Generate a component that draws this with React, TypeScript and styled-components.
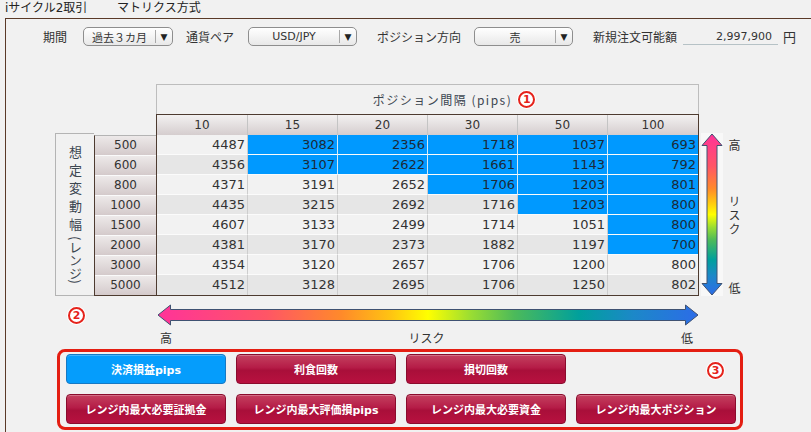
import styled, { createGlobalStyle } from 'styled-components';

const GlobalStyle = createGlobalStyle`
  html, body {
    margin: 0;
    padding: 0;
    background: #f1f1f1;
  }
  body {
    font-family: "DejaVu Sans", "Noto Sans CJK JP", sans-serif;
    color: #333;
  }
`

const COLS = ['10', '15', '20', '30', '50', '100'];

type MatrixRow = {
  range: string,
  values: number[],
  hot: number,
}

// hot = index of the first highlighted column (6 = none)
const ROWS: MatrixRow[] = [
  { range: '500', values: [4487, 3082, 2356, 1718, 1037, 693], hot: 1 },
  { range: '600', values: [4356, 3107, 2622, 1661, 1143, 792], hot: 1 },
  { range: '800', values: [4371, 3191, 2652, 1706, 1203, 801], hot: 3 },
  { range: '1000', values: [4435, 3215, 2692, 1716, 1203, 800], hot: 4 },
  { range: '1500', values: [4607, 3133, 2499, 1714, 1051, 800], hot: 5 },
  { range: '2000', values: [4381, 3170, 2373, 1882, 1197, 700], hot: 5 },
  { range: '3000', values: [4354, 3120, 2657, 1706, 1200, 800], hot: 6 },
  { range: '5000', values: [4512, 3128, 2695, 1706, 1250, 802], hot: 6 },
];

const BUTTONS_TOP = ['決済損益pips', '利食回数', '損切回数'];
const BUTTONS_BOTTOM = ['レンジ内最大必要証拠金', 'レンジ内最大評価損pips', 'レンジ内最大必要資金', 'レンジ内最大ポジション'];

const Page = styled.div`
  width: 811px;
  height: 432px;
  overflow: hidden;
`

const TitleBar = styled.div`
  display: flex;
  height: 18px;
  padding-left: 5px;
  font-size: 12px;
  line-height: 16px;
  color: #222;
`

const TitleItem = styled.span<{ $w?: number }>`
  width: ${p => p.$w ? `${p.$w}px` : 'auto'};
`

const Panel = styled.section`
  margin-left: 5px;
  height: 414px;
  border-top: 1px solid #5a3a28;
  border-left: 1px solid #5a3a28;
`

const ControlRow = styled.div`
  display: flex;
  align-items: center;
  height: 19px;
  margin-top: 8px;
`

const Label = styled.span<{ $before: number, $after: number }>`
  margin-left: ${p => p.$before}px;
  margin-right: ${p => p.$after}px;
  font-family: "Noto Sans CJK JP", sans-serif;
  font-size: 12px;
  color: #333;
`

const Select = styled.div<{ $w: number }>`
  display: flex;
  align-items: center;
  box-sizing: border-box;
  width: ${p => p.$w}px;
  height: 19px;
  border: 1px solid #8e8e8e;
  border-radius: 5px;
  background: linear-gradient(#ffffff, #e8e8e8);
`

const SelectText = styled.span`
  flex: 1;
  text-align: center;
  font-size: 11px;
  color: #333;
`

const SelectSep = styled.span`
  width: 1px;
  height: 13px;
  background: #a8a8a8;
`

const SelectArrow = styled.span`
  width: 16px;
  text-align: center;
  font-size: 9px;
  color: #222;
`

const Amount = styled.span`
  box-sizing: border-box;
  width: 95px;
  padding-right: 6px;
  border-bottom: 1px solid #b6c2c6;
  text-align: right;
  font-size: 11px;
  line-height: 15px;
`

const Yen = styled.span`
  margin-left: 5px;
  font-family: "Noto Sans CJK JP", sans-serif;
  font-size: 13px;
`

const Matrix = styled.div`
  display: flex;
  align-items: flex-end;
  margin: 38px 0 0 49px;
`

const SideLabel = styled.div`
  display: flex;
  justify-content: center;
  align-items: center;
  box-sizing: border-box;
  width: 39px;
  height: 163px;
  border: 1px solid #b4b4b4;
  border-right: none;
`

const SideText = styled.span`
  writing-mode: vertical-rl;
  font-family: "Noto Sans CJK JP", sans-serif;
  font-size: 13px;
  line-height: 14px;
  color: #3c4650;
`

const SideMain = styled.span`
  letter-spacing: 5px;
`

const SideSub = styled.span`
  letter-spacing: 0px;
`

const RowHeads = styled.div`
  display: flex;
  flex-direction: column;
  width: 61px;
  border-left: 1px solid #4d3b30;
  border-top: 1px solid #b4b4b4;
  border-bottom: 1px solid #4d3b30;
`

const RowHead = styled.div`
  box-sizing: border-box;
  height: 20px;
  line-height: 19px;
  border-bottom: 1px solid #fafafa;
  background: linear-gradient(#ede9e9, #d4cacb);
  text-align: center;
  font-size: 12px;
  color: #333;
  &:last-child {
    border-bottom: none;
    height: 19px;
  }
`

const DataBlock = styled.div`
  display: flex;
  flex-direction: column;
  width: 543px;
`

const TitleBox = styled.div`
  display: flex;
  justify-content: center;
  align-items: center;
  box-sizing: border-box;
  height: 30px;
  padding-left: 53px;
  border: 1px solid #bdbdbd;
  border-bottom: none;
`

const TitleText = styled.span`
  font-family: "Noto Sans CJK JP", sans-serif;
  font-size: 12px;
  letter-spacing: 1.5px;
  color: #3c4650;
  margin-right: 6px;
`

const Table = styled.div`
  border: 1px solid #4d3b30;
`

const Row = styled.div`
  display: grid;
  grid-template-columns: 91px repeat(5, 90px);
`

const HeadCell = styled.div`
  box-sizing: border-box;
  height: 20px;
  line-height: 20px;
  border-right: 1px solid #c4c4c4;
  background: linear-gradient(#f3f1f1, #d5cdce);
  text-align: center;
  font-size: 12px;
  color: #333;
  &:last-child {
    border-right: none;
  }
`

const Cell = styled.div<{ $alt: boolean, $hot: boolean, $last: boolean }>`
  box-sizing: border-box;
  height: 20px;
  line-height: 19px;
  padding-right: 2px;
  border-right: 1px solid ${p => p.$hot ? '#d8e8f4' : '#cdcdcd'};
  border-bottom: ${p => p.$last ? 'none' : '1px solid #fbfbfb'};
  background: ${p => p.$hot ? '#0099ff' : p.$alt ? '#e6e6e6' : '#f2f2f2'};
  text-align: right;
  font-size: 13px;
  color: ${p => p.$hot ? '#1c2a38' : '#333'};
  &:last-child {
    border-right: none;
  }
`

const VArrowBox = styled.div`
  width: 22px;
  height: 163px;
  margin-left: 2px;
  background: #f8f8f8;
  svg {
    display: block;
  }
`

const VLabels = styled.div`
  display: flex;
  flex-direction: column;
  justify-content: space-between;
  align-items: center;
  box-sizing: border-box;
  height: 163px;
  padding: 5px 0 2px;
  margin-left: 5px;
  font-family: "Noto Sans CJK JP", sans-serif;
  font-size: 12px;
  line-height: 13px;
  color: #333;
`

const VerticalText = styled.span`
  writing-mode: vertical-rl;
  letter-spacing: 2px;
`

const ArrowRow = styled.div`
  display: flex;
  align-items: center;
  margin: 8px 0 0 62px;
  svg {
    display: block;
    margin-left: 72px;
  }
`

const Marker = styled.span`
  display: inline-flex;
  justify-content: center;
  align-items: center;
  box-sizing: border-box;
  width: 17px;
  height: 17px;
  border: 2px solid #e5231b;
  border-radius: 50%;
  box-shadow: 0 0 0 1px #fff;
  background: #fff;
  color: #e5231b;
  font-size: 11px;
  font-weight: bold;
  line-height: 1;
`

const RiskLabels = styled.div`
  display: flex;
  justify-content: space-between;
  box-sizing: border-box;
  width: 541px;
  margin: 6px 0 0 150px;
  padding: 0 4px;
  font-family: "Noto Sans CJK JP", sans-serif;
  font-size: 12px;
  line-height: 12px;
  color: #333;
`

const ButtonBox = styled.div`
  display: grid;
  grid-template-columns: repeat(4, 160px);
  gap: 10px;
  box-sizing: border-box;
  width: 686px;
  margin: 5px 0 0 51px;
  padding: 2px 4px 3px 6px;
  border: 3px solid #e41e12;
  border-radius: 8px;
`

const ModeButton = styled.button<{ $active?: boolean }>`
  box-sizing: border-box;
  height: 30px;
  padding: 0;
  border: 1px solid ${p => p.$active ? '#1679c4' : '#8a0c2d'};
  border-radius: 4px;
  background: ${p => p.$active
    ? '#059dfc'
    : 'linear-gradient(#c4415f 0%, #b51c47 45%, #a90f3a 55%, #b8113f 100%)'};
  box-shadow: inset 0 1px 0 rgba(255, 255, 255, 0.25);
  color: #fff;
  font-family: "DejaVu Sans", "Noto Sans CJK JP", sans-serif;
  font-size: 11px;
  font-weight: bold;
`

const MarkerCell = styled.div`
  justify-self: end;
  align-self: center;
  margin-right: 12px;
`

const VerticalArrow = () => (
  <svg width="22" height="163" viewBox="0 0 22 163">
    <defs>
      <linearGradient id="vgrad" x1="0" y1="0" x2="0" y2="1">
        <stop offset="0" stopColor="#ff3399" />
        <stop offset="0.2" stopColor="#ff5566" />
        <stop offset="0.34" stopColor="#ff8a2a" />
        <stop offset="0.42" stopColor="#ffc312" />
        <stop offset="0.5" stopColor="#ffff00" />
        <stop offset="0.58" stopColor="#99dd33" />
        <stop offset="0.66" stopColor="#4cba5a" />
        <stop offset="0.78" stopColor="#00a09c" />
        <stop offset="0.88" stopColor="#1c88c8" />
        <stop offset="1" stopColor="#2c6ce8" />
      </linearGradient>
    </defs>
    <path
      d="M11 1 L21 12.5 L16 12.5 L16 150.5 L21 150.5 L11 162 L1 150.5 L6 150.5 L6 12.5 L1 12.5 Z"
      fill="url(#vgrad)"
      stroke="#3f5272"
      strokeWidth="1"
    />
  </svg>
);

const HorizontalArrow = () => (
  <svg width="542" height="22" viewBox="0 0 542 22">
    <defs>
      <linearGradient id="hgrad" x1="0" y1="0" x2="1" y2="0">
        <stop offset="0" stopColor="#ff3399" />
        <stop offset="0.2" stopColor="#ff5566" />
        <stop offset="0.34" stopColor="#ff8a2a" />
        <stop offset="0.43" stopColor="#ffc312" />
        <stop offset="0.5" stopColor="#ffff00" />
        <stop offset="0.58" stopColor="#99dd33" />
        <stop offset="0.66" stopColor="#4cba5a" />
        <stop offset="0.78" stopColor="#00a09c" />
        <stop offset="0.88" stopColor="#1c88c8" />
        <stop offset="1" stopColor="#2c6ce8" />
      </linearGradient>
    </defs>
    <path
      d="M1 11 L13.5 1 L13.5 5.5 L528.5 5.5 L528.5 1 L541 11 L528.5 21 L528.5 16.5 L13.5 16.5 L13.5 21 Z"
      fill="url(#hgrad)"
      stroke="#3f5272"
      strokeWidth="1"
    />
  </svg>
);

export default function App() {
  return (
    <Page>
      <GlobalStyle />
      <TitleBar>
        <TitleItem $w={112}>iサイクル2取引</TitleItem>
        <TitleItem>マトリクス方式</TitleItem>
      </TitleBar>
      <Panel>
        <ControlRow>
          <Label $before={37} $after={16}>期間</Label>
          <Select $w={90}>
            <SelectText>過去３カ月</SelectText>
            <SelectSep />
            <SelectArrow>▼</SelectArrow>
          </Select>
          <Label $before={13} $after={14}>通貨ペア</Label>
          <Select $w={109}>
            <SelectText>USD/JPY</SelectText>
            <SelectSep />
            <SelectArrow>▼</SelectArrow>
          </Select>
          <Label $before={20} $after={13}>ポジション方向</Label>
          <Select $w={99}>
            <SelectText>売</SelectText>
            <SelectSep />
            <SelectArrow>▼</SelectArrow>
          </Select>
          <Label $before={20} $after={6}>新規注文可能額</Label>
          <Amount>2,997,900</Amount>
          <Yen>円</Yen>
        </ControlRow>

        <Matrix>
          <SideLabel>
            <SideText>
              <SideMain>想定変動幅</SideMain>
              <SideSub>(レンジ)</SideSub>
            </SideText>
          </SideLabel>
          <RowHeads>
            {ROWS.map(r => <RowHead key={r.range}>{r.range}</RowHead>)}
          </RowHeads>
          <DataBlock>
            <TitleBox>
              <TitleText>ポジション間隔 (pips)</TitleText>
              <Marker>1</Marker>
            </TitleBox>
            <Table>
              <Row>
                {COLS.map(c => <HeadCell key={c}>{c}</HeadCell>)}
              </Row>
              {ROWS.map((r, ri) => (
                <Row key={r.range}>
                  {r.values.map((v, ci) => (
                    <Cell
                      key={ci}
                      $alt={ri % 2 === 1}
                      $hot={ci >= r.hot}
                      $last={ri === ROWS.length - 1}
                    >
                      {v}
                    </Cell>
                  ))}
                </Row>
              ))}
            </Table>
          </DataBlock>
          <VArrowBox>
            <VerticalArrow />
          </VArrowBox>
          <VLabels>
            <span>高</span>
            <VerticalText>リスク</VerticalText>
            <span>低</span>
          </VLabels>
        </Matrix>

        <ArrowRow>
          <Marker>2</Marker>
          <HorizontalArrow />
        </ArrowRow>
        <RiskLabels>
          <span>高</span>
          <span>リスク</span>
          <span>低</span>
        </RiskLabels>

        <ButtonBox>
          {BUTTONS_TOP.map((b, i) => (
            <ModeButton key={b} $active={i === 0}>{b}</ModeButton>
          ))}
          <MarkerCell>
            <Marker>3</Marker>
          </MarkerCell>
          {BUTTONS_BOTTOM.map(b => <ModeButton key={b}>{b}</ModeButton>)}
        </ButtonBox>
      </Panel>
    </Page>
  );
}
